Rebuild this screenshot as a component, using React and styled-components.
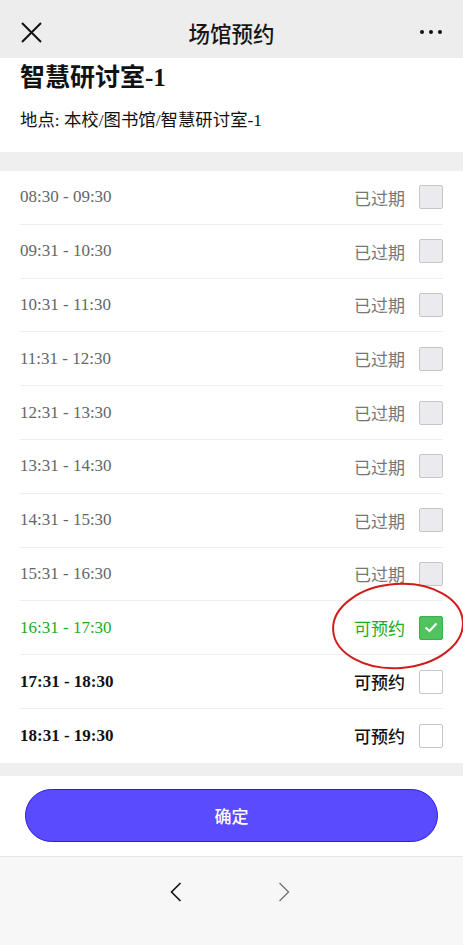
import React from "react";
import styled, { createGlobalStyle } from "styled-components";

const Global = createGlobalStyle`
  html, body { margin: 0; padding: 0; background: #ffffff; }
  body { font-family: "Noto Sans CJK SC", "Noto Sans", sans-serif; }
  * { box-sizing: border-box; }
`;

const Page = styled.div`
  width: 463px;
  min-height: 945px;
  display: flex;
  flex-direction: column;
  background: #ffffff;
`;

const NavBar = styled.header`
  height: 58px;
  background: #ededed;
  display: grid;
  grid-template-columns: 60px 1fr 60px;
  align-items: center;
  padding-top: 6px;
`;

const NavButton = styled.div`
  display: flex;
  align-items: center;
  justify-content: ${(p) => (p.$right ? "flex-end" : "flex-start")};
  padding: ${(p) => (p.$right ? "0 21px 0 0" : "0 0 0 21px")};
`;

const NavTitle = styled.h1`
  margin: 0;
  text-align: center;
  font-family: "Noto Sans CJK SC", sans-serif;
  font-size: 21.5px;
  font-weight: 500;
  color: #161616;
`;

const Dots = styled.div`
  display: flex;
  gap: 5px;
  span {
    width: 4px;
    height: 4px;
    border-radius: 50%;
    background: #111;
  }
`;

const Info = styled.section`
  padding: 4px 20px 20px;
`;

const RoomName = styled.h2`
  margin: 0;
  font-family: "Liberation Serif", "Noto Sans CJK SC", serif;
  font-size: 25px;
  line-height: 32px;
  font-weight: 700;
  color: #111;
`;

const Location = styled.p`
  margin: 14px 0 0;
  font-family: "Liberation Serif", "Noto Sans CJK SC", serif;
  font-size: 17.4px;
  line-height: 24px;
  color: #111;
`;

const Band = styled.div`
  height: ${(p) => p.$h}px;
  background: #efefef;
`;

const List = styled.ul`
  list-style: none;
  margin: 0;
  padding: 0 20px;
  position: relative;
`;

const Row = styled.li`
  height: 53.8px;
  display: flex;
  align-items: center;
  justify-content: space-between;
  border-bottom: ${(p) => (p.$last ? "none" : "1px solid #efefef")};
`;

const colors = {
  expired: { time: "#666666", status: "#777777" },
  selected: { time: "#1aad19", status: "#1aad19" },
  open: { time: "#111111", status: "#111111" },
};

const Time = styled.span`
  font-family: "Liberation Serif", serif;
  font-size: 17px;
  font-weight: ${(p) => (p.$state === "open" ? 700 : 400)};
  color: ${(p) => colors[p.$state].time};
`;

const Right = styled.div`
  display: flex;
  align-items: center;
  gap: 14px;
`;

const Status = styled.span`
  font-family: "Noto Sans CJK SC", sans-serif;
  font-size: 17px;
  font-weight: ${(p) => (p.$state === "open" ? 500 : 400)};
  color: ${(p) => colors[p.$state].status};
`;

const Box = styled.span`
  width: 24px;
  height: 24px;
  border-radius: 2px;
  display: flex;
  align-items: center;
  justify-content: center;
  border: 1px solid
    ${(p) => (p.$state === "selected" ? "#3cae4a" : "#c6c6c6")};
  background: ${(p) =>
    p.$state === "selected"
      ? "#4fc45c"
      : p.$state === "expired"
      ? "#ebebef"
      : "#ffffff"};
`;

const Ring = styled.svg`
  position: absolute;
  left: 312px;
  top: 410px;
  pointer-events: none;
`;

const Footer = styled.div`
  padding: 13px 25px 14px;
`;

const Confirm = styled.button`
  width: 100%;
  height: 53px;
  border-radius: 27px;
  border: 1px solid #2a1ce0;
  background: #5a4bff;
  color: #ffffff;
  font-family: "Noto Sans CJK SC", sans-serif;
  font-size: 17px;
  font-weight: 500;
  cursor: pointer;
`;

const BottomBar = styled.nav`
  flex: 1;
  min-height: 89px;
  background: #f7f7f7;
  border-top: 1px solid #e6e6e6;
  display: flex;
  justify-content: center;
  gap: 96px;
  padding-top: 25px;
  padding-right: 4px;
`;

const slots = [
  ["08:30 - 09:30", "expired"],
  ["09:31 - 10:30", "expired"],
  ["10:31 - 11:30", "expired"],
  ["11:31 - 12:30", "expired"],
  ["12:31 - 13:30", "expired"],
  ["13:31 - 14:30", "expired"],
  ["14:31 - 15:30", "expired"],
  ["15:31 - 16:30", "expired"],
  ["16:31 - 17:30", "selected"],
  ["17:31 - 18:30", "open"],
  ["18:31 - 19:30", "open"],
];

export default function App() {
  return (
    <Page>
      <Global />
      <NavBar>
        <NavButton>
          <svg width="21" height="21" viewBox="0 0 21 21">
            <path d="M1 1L20 20M20 1L1 20" stroke="#111" strokeWidth="2" fill="none" />
          </svg>
        </NavButton>
        <NavTitle>场馆预约</NavTitle>
        <NavButton $right>
          <Dots>
            <span />
            <span />
            <span />
          </Dots>
        </NavButton>
      </NavBar>
      <Info>
        <RoomName>智慧研讨室-1</RoomName>
        <Location>地点: 本校/图书馆/智慧研讨室-1</Location>
      </Info>
      <Band $h={19} />
      <List>
        {slots.map(([t, s], i) => (
          <Row key={t} $last={i === slots.length - 1}>
            <Time $state={s}>{t}</Time>
            <Right>
              <Status $state={s}>{s === "expired" ? "已过期" : "可预约"}</Status>
              <Box $state={s}>
                {s === "selected" && (
                  <svg width="14" height="11" viewBox="0 0 14 11">
                    <path d="M1.5 5.5L5.5 9L12.5 1.5" stroke="#fff" strokeWidth="2" fill="none" />
                  </svg>
                )}
              </Box>
            </Right>
          </Row>
        ))}
        <Ring width="151" height="90" viewBox="0 0 151 90">
          <ellipse cx="86" cy="45" rx="65" ry="42" stroke="#d11c1c" strokeWidth="2" fill="none" transform="rotate(-4 86 45)" />
        </Ring>
      </List>
      <Band $h={13} />
      <Footer>
        <Confirm>确定</Confirm>
      </Footer>
      <BottomBar>
        <svg width="12" height="20" viewBox="0 0 12 20">
          <path d="M10.5 1L1.5 10L10.5 19" stroke="#111" strokeWidth="1.6" fill="none" />
        </svg>
        <svg width="12" height="20" viewBox="0 0 12 20">
          <path d="M1.5 1L10.5 10L1.5 19" stroke="#777" strokeWidth="1.4" fill="none" />
        </svg>
      </BottomBar>
    </Page>
  );
}
